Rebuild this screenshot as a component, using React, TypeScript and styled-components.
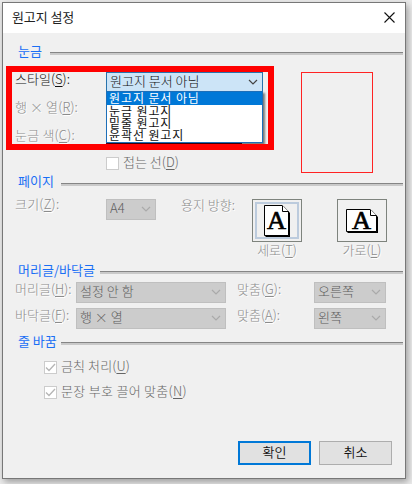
import React from "react";
import styled, { createGlobalStyle } from "styled-components";

const Global = createGlobalStyle`
  * { box-sizing: border-box; }
  html, body { margin: 0; background: #ececec; overflow: hidden; }
  body { font: 13px/16px "Noto Sans CJK KR", sans-serif; font-weight: 300; color: #111; }
  button { font: inherit; color: inherit; }
`;
const Desktop = styled.div`
  width: 412px; height: 484px; padding: 2px; overflow: hidden; background: #ececec;
`;
const Dialog = styled.main`
  position: relative; width: 404px; height: 477px; display: flex; flex-direction: column;
  border: 1px solid #777; background: #f0f0f0; box-shadow: 2px 3px 7px rgba(0,0,0,.34);
`;
const TitleBar = styled.header`
  height: 30px; flex: none; display: flex; align-items: center; justify-content: space-between;
  padding: 0 10px 0 9px; background: #fff; font-weight: 400;
`;
const Title = styled.h1`margin: 0 0 2px; font: inherit; letter-spacing: -.1px; color: #222;`;
const CloseButton = styled.button`display: flex; padding: 0; margin-bottom: 2px; border: 0; background: none;`;
const Section = styled.section<{ $h: number }>`height: ${p => p.$h}px; flex: none; display: flex; flex-direction: column;`;
const Heading = styled.h2<{ $gap: number; $rule: number; $top?: number }>`
  margin: ${p => p.$top ?? 0}px 0 0; height: 16px; flex: none; display: flex; align-items: center; gap: ${p => p.$gap}px;
  padding: 0 2px 0 15px; font: inherit; font-weight: 400; color: #1a6ff5; white-space: nowrap;
  &::after { content: ""; flex: 1; height: 2px; border-top: 1px solid #858585; background: #c9c9c9; transform: translateY(${p => p.$rule}px); }
`;
const Row = styled.div<{ $h: number; $top?: number }>`
  display: flex; align-items: flex-start; height: ${p => p.$h}px; margin-top: ${p => p.$top ?? 0}px; padding-left: 12px; flex: none;
`;
const Label = styled.label<{ $w?: number; $on?: boolean; $dy?: number; $ls?: number }>`
  width: ${p => p.$w ? p.$w + "px" : "auto"}; flex: none; white-space: nowrap;
  margin-top: ${p => p.$dy ?? 0}px; letter-spacing: ${p => p.$ls ?? 0}px;
  color: ${p => p.$on ? "#111" : "#8c8c8c"}; text-shadow: ${p => p.$on ? "none" : "1px 1px #fff"};
`;
const PageLabel = styled(Label)`width: 96px; padding-left: 25px; margin-top: -2px;`;
const AlignLabel = styled(Label)`width: 88px; padding-left: 11px; margin-top: -1px;`;
const Key = styled.span`text-decoration: underline; text-decoration-thickness: 1px; text-underline-offset: 2px;`;
const Select = styled.div<{ $w: number; $open?: boolean }>`
  position: relative; width: ${p => p.$w}px; height: ${p => p.$open ? 20 : 21}px; flex: none;
  display: flex; align-items: center; justify-content: space-between; padding: 0 4px 3px 3px;
  border: 1px solid ${p => p.$open ? "#2873ac" : "#bfbfbf"};
  background: ${p => p.$open ? "#cce4f7" : "#ccc"}; color: ${p => p.$open ? "#111" : "#5c5c5c"};
  white-space: nowrap;
  & > svg { position: relative; top: 1px; }
`;
const Popup = styled.ul`
  position: absolute; z-index: 2; left: -1px; top: 18px; width: 157px; height: 52px; margin: 0; padding: 0;
  list-style: none; background: #fff; border: 1px solid #1d6fb8; box-shadow: 2px 2px 2px rgba(0,0,0,.5);
  font-size: 12px; letter-spacing: .9px; font-weight: 400;
`;
const Option = styled.li<{ $active?: boolean }>`
  height: 12px; line-height: 12px; padding-left: 2px;
  ${p => p.$active ? "height: 13px; background: #0078d7; color: #fff;" : ""}
`;
const ColorBox = styled.div`width: 136px; height: 21px; background: #650018;`;
const Columns = styled.div`display: flex; align-items: flex-start;`;
const Fields = styled.div`width: 298px; flex: none;`;
const Preview = styled.div`width: 72px; height: 101px; margin-top: 13px; border: 1px solid #ff2323;`;
const Highlight = styled.div`
  position: absolute; z-index: 3; left: 3px; top: 63px; width: 268px; height: 84px; border: 6px solid #f00; pointer-events: none;
`;
const Check = styled.label<{ $ls?: number }>`
  display: flex; align-items: center; gap: 4px; height: 14px; white-space: nowrap;
  letter-spacing: ${p => p.$ls ?? 0}px; color: #666;
  & > span:last-child { margin-bottom: 2px; }
`;
const Checks = styled.div`display: flex; flex-direction: column; gap: 11px; padding: 11px 0 0 41px;`;
const Box = styled.span`width: 13px; height: 13px; display: flex; border: 1px solid #ccc; background: #fff;`;
const PageChoice = styled.div<{ $ml: number }>`width: 50px; margin-left: ${p => p.$ml}px; display: flex; flex-direction: column; align-items: center;`;
const PageButton = styled.button<{ $selected?: boolean }>`
  width: 50px; height: 43px; padding: 2px; display: flex; background: #f0f0f0; border: 1px solid #7e837d;
  & > span { flex: 1; height: 37px; display: flex; align-items: center; justify-content: center; border: 2px solid ${p => p.$selected ? "#bccbdd" : "transparent"}; }
`;
const Footer = styled.footer`display: flex; justify-content: flex-end; gap: 8px; padding-right: 13px;`;
const Action = styled.button<{ $primary?: boolean }>`
  width: 73px; height: 24px; padding: 0 0 3px; background: #e1e1e1; font-weight: 350; line-height: 16px;
  border: ${p => p.$primary ? "2px solid #0078d7" : "1px solid #adadad"};
`;

const Chevron = ({ color = "#aaa" }: { color?: string }) => (
  <svg width="10" height="8" viewBox="0 0 10 8"><path d="M1 2l4 4 4-4" fill="none" stroke={color} strokeWidth="1.2" /></svg>
);
const Tick = () => (
  <svg width="11" height="11" viewBox="0 0 11 11"><path d="M1 5.5l3 3L10 2" fill="none" stroke="#b5b5b5" strokeWidth="1.3" /></svg>
);
const PageIcon = ({ w, h }: { w: number; h: number }) => (
  <svg width={w} height={h} viewBox={`0 0 ${w} ${h}`}>
    <path d={`M1.500 1.500H${w - 6}L${w} 8V${h}H1.500z`} fill="#000" />
    <path d={`M.5 .5H${w - 8}L${w - 1.5} 7V${h - 1.5}H.5z`} fill="#fff" stroke="#000" />
    <path d={`M${w - 7.5} .5V6.500H${w - 1.5}`} fill="#fff" stroke="#000" />
    <text
      x={w / 2 - 0.5} y={h / 2 + 7.5} textAnchor="middle" fontFamily="Liberation Serif" fontWeight="400"
      fontSize="25" stroke="#000" strokeWidth=".7" textLength="19" lengthAdjust="spacingAndGlyphs"
    >A</text>
  </svg>
);
const Named = ({ text, k, tail = "" }: { text: string; k: string; tail?: string }) => <>{text}(<Key>{k}</Key>){tail}</>;

export default function App() {
  return (
    <Desktop>
      <Global />
      <Dialog>
        <TitleBar>
          <Title>원고지 설정</Title>
          <CloseButton aria-label="닫기">
            <svg width="11" height="11" viewBox="0 0 11 11"><path d="M.5.5l10 10M10.500.5l-10 10" stroke="#111" strokeWidth="1.1" /></svg>
          </CloseButton>
        </TitleBar>

        <Section $h={140}>
          <Heading $gap={8} $rule={2} $top={10}>눈금</Heading>
          <Columns>
            <Fields>
              <Row $h={28} $top={13}>
                <Label $w={91} $on $dy={-1}><Named text="스타일" k="S" tail=":" /></Label>
                <Select $w={157} $open>
                  <span>원고지 문서 아님</span><Chevron color="#444" />
                  <Popup>
                    <Option $active>원고지 문서 아님</Option>
                    <Option>눈금 원고지</Option>
                    <Option>밑줄 원고지</Option>
                    <Option>윤곽선 원고지</Option>
                  </Popup>
                </Select>
              </Row>
              <Row $h={23}><Label $w={91} $dy={-1} $ls={.1}><Named text="행 × 열" k="R" tail=":" /></Label></Row>
              <Row $h={33}><Label $w={91} $dy={4} $ls={.2}><Named text="눈금 색" k="C" tail=":" /></Label><ColorBox /></Row>
              <Row $h={14}><Label $w={91} /><Check><Box /><span><Named text="접는 선" k="D" /></span></Check></Row>
            </Fields>
            <Preview />
          </Columns>
        </Section>

        <Section $h={89}>
          <Heading $gap={7} $rule={3}>페이지</Heading>
          <Row $h={60} $top={10}>
            <Label $w={91} $dy={-3} $ls={.2}><Named text="크기" k="Z" tail=":" /></Label>
            <Select $w={50}><span>A4</span><Chevron /></Select>
            <PageLabel>용지 방향:</PageLabel>
            <PageChoice $ml={0}>
              <PageButton $selected><span><PageIcon w={26} h={32} /></span></PageButton>
              <Label><Named text="세로" k="T" /></Label>
            </PageChoice>
            <PageChoice $ml={35}>
              <PageButton><span><PageIcon w={32} h={24} /></span></PageButton>
              <Label><Named text="가로" k="L" /></Label>
            </PageChoice>
          </Row>
        </Section>

        <Section $h={71}>
          <Heading $gap={5} $rule={2}>머리글/바닥글</Heading>
          <Row $h={26} $top={4}>
            <Label $w={61} $dy={-1}><Named text="머리글" k="H" tail=":" /></Label>
            <Select $w={150}><span>설정 안 함</span><Chevron /></Select>
            <AlignLabel><Named text="맞춤" k="G" tail=":" /></AlignLabel>
            <Select $w={72}><span>오른쪽</span><Chevron /></Select>
          </Row>
          <Row $h={25}>
            <Label $w={61} $dy={-1}><Named text="바닥글" k="F" tail=":" /></Label>
            <Select $w={150}><span>행 × 열</span><Chevron /></Select>
            <AlignLabel><Named text="맞춤" k="A" tail=":" /></AlignLabel>
            <Select $w={72}><span>왼쪽</span><Chevron /></Select>
          </Row>
        </Section>

        <Section $h={108}>
          <Heading $gap={4} $rule={2}>줄 바꿈</Heading>
          <Checks>
            <Check $ls={.1}><Box><Tick /></Box><span><Named text="금칙 처리" k="U" /></span></Check>
            <Check $ls={.3}><Box><Tick /></Box><span><Named text="문장 부호 끌어 맞춤" k="N" /></span></Check>
          </Checks>
        </Section>

        <Footer>
          <Action $primary>확인</Action>
          <Action>취소</Action>
        </Footer>
        <Highlight />
      </Dialog>
    </Desktop>
  );
}
